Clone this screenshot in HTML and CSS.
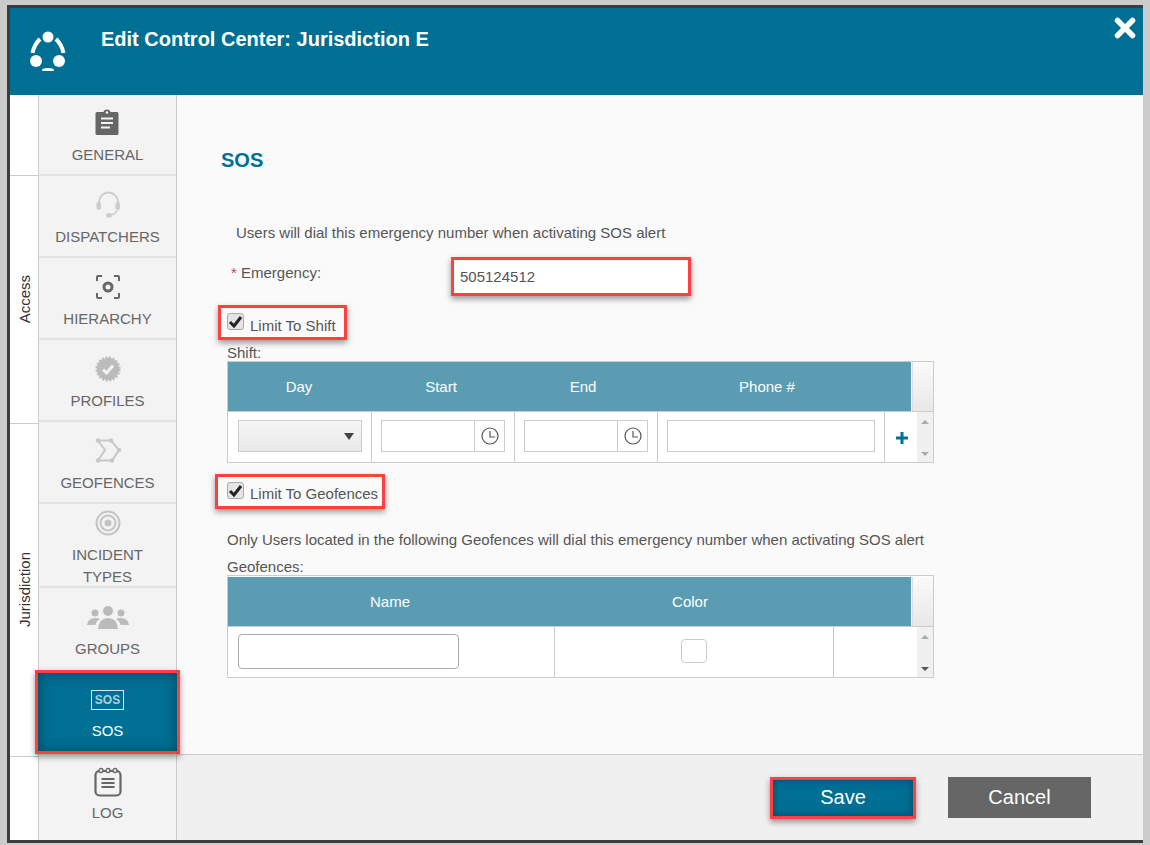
FILE: index.html
```html
<!DOCTYPE html>
<html lang="en">
<head>
<meta charset="utf-8">
<title>Edit Control Center</title>
<link rel="stylesheet" href="styles.css">
</head>
<body>
<div class="window">
  <header class="topbar">
    <svg class="logo" width="40" height="44" viewBox="0 0 40 44">
      <circle cx="21" cy="6" r="5.500" fill="#fff"/><circle cx="9" cy="30" r="6" fill="#fff"/><circle cx="32" cy="30" r="6" fill="#fff"/>
      <path d="M13 8 Q7 14 5.500 22" stroke="#fff" stroke-width="4" fill="none"/>
      <path d="M29 8 Q35 14 36.500 22" stroke="#fff" stroke-width="4" fill="none"/>
      <path d="M15.500 38 Q21 36 26.500 38 L27 40 H15 Z" fill="#fff"/>
    </svg>
    <h1 class="title">Edit Control Center: Jurisdiction E</h1>
    <svg class="close" width="22" height="22" viewBox="0 0 22 22"><path d="M3.500 3.500 L18.500 18.500 M18.500 3.500 L3.500 18.500" stroke="#fff" stroke-width="5.500" stroke-linecap="round"/></svg>
  </header>
  <div class="body">
    <div class="groups">
      <div class="group group-top"></div>
      <div class="group group-access"><span class="group-text">Access</span></div>
      <div class="group group-jur"><span class="group-text">Jurisdiction</span></div>
      <div class="group group-end"></div>
    </div>
    <nav class="tabs">
      <div class="tab tab-general">
        <svg class="tab-icon" viewBox="0 0 28 28"><path d="M3 4 H9.500 Q10 1.500 13 1.500 Q16 1.500 16.500 4 H23 Q24.500 4 24.500 5.500 V25.500 Q24.500 27 23 27 H3 Q1.500 27 1.500 25.500 V5.500 Q1.500 4 3 4 Z" fill="#666"/><path d="M7 10.500 H19 M7 15 H19 M7 19.500 H16" stroke="#f3f3f3" stroke-width="2"/><circle cx="13" cy="4.500" r="1.300" fill="#f3f3f3"/></svg>
        <span class="tab-label">GENERAL</span>
      </div>
      <div class="tab">
        <svg class="tab-icon" viewBox="0 0 28 28"><path d="M5 15 V11 A9.500 9.500 0 0 1 24 11 V15" fill="none" stroke="#ccc" stroke-width="1.800"/><rect x="2.500" y="11" width="4.500" height="8" rx="2.200" fill="#ccc"/><rect x="21.500" y="11" width="4.500" height="8" rx="2.200" fill="#ccc"/><path d="M23 19 Q22 23 17 24" fill="none" stroke="#ccc" stroke-width="1.500"/><rect x="12" y="22" width="6" height="4.500" rx="2.200" fill="#ccc"/></svg>
        <span class="tab-label">DISPATCHERS</span>
      </div>
      <div class="tab">
        <svg class="tab-icon" viewBox="0 0 28 28"><path d="M8 3 H4 Q3 3 3 4 V8 M20 3 H24 Q25 3 25 4 V8 M8 25 H4 Q3 25 3 24 V20 M20 25 H24 Q25 25 25 24 V20" fill="none" stroke="#666" stroke-width="2"/><circle cx="14" cy="14" r="4" fill="none" stroke="#666" stroke-width="3"/></svg>
        <span class="tab-label">HIERARCHY</span>
      </div>
      <div class="tab">
        <svg class="tab-icon" viewBox="0 0 28 28"><circle cx="14" cy="14" r="11" fill="#bbb" stroke="#bbb" stroke-width="3" stroke-dasharray="2 1.500"/><path d="M9 14.500 L12.500 18 L19 10.500" fill="none" stroke="#f3f3f3" stroke-width="3"/></svg>
        <span class="tab-label">PROFILES</span>
      </div>
      <div class="tab">
        <svg class="tab-icon" viewBox="0 0 28 28"><path d="M4 3.500 H17 L25 13 L18 23.500 H4 L11 13 Z" fill="none" stroke="#c8c8c8" stroke-width="2"/><g fill="#c8c8c8"><circle cx="4" cy="3.500" r="2.200"/><circle cx="17" cy="3.500" r="2.200"/><circle cx="25" cy="13" r="2.200"/><circle cx="18" cy="23.500" r="2.200"/><circle cx="4" cy="23.500" r="2.200"/></g></svg>
        <span class="tab-label">GEOFENCES</span>
      </div>
      <div class="tab tab-incident">
        <svg class="tab-icon" viewBox="0 0 28 28"><circle cx="14" cy="14" r="11.500" fill="none" stroke="#c4c4c4" stroke-width="2"/><circle cx="14" cy="14" r="7.500" fill="none" stroke="#c4c4c4" stroke-width="2"/><circle cx="14" cy="14" r="3.500" fill="#c4c4c4"/></svg>
        <span class="tab-label">INCIDENT TYPES</span>
      </div>
      <div class="tab tab-groups">
        <svg class="tab-icon tab-icon-wide" viewBox="0 0 42 28"><g fill="#bbb"><circle cx="21" cy="8" r="5"/><circle cx="8" cy="10" r="3.500"/><circle cx="34" cy="10" r="3.500"/><path d="M11 26 Q12 15 21 15 Q30 15 31 26 Z"/><path d="M0 22 Q1 15 8 15 Q11 15 13 16 Q9 18 8.500 22 Z"/><path d="M42 22 Q41 15 34 15 Q31 15 29 16 Q33 18 33.500 22 Z"/></g></svg>
        <span class="tab-label">GROUPS</span>
      </div>
      <div class="tab tab-sos">
        <span class="sos-badge">SOS</span>
        <span class="tab-label">SOS</span>
      </div>
      <div class="tab tab-log">
        <svg class="tab-icon tab-icon-tall" viewBox="0 0 28 30"><rect x="1.500" y="4" width="25" height="24.500" rx="4" fill="none" stroke="#666" stroke-width="2.200"/><path d="M7.500 12 H20.500 M7.500 16 H20.500 M7.500 20 H20.500" stroke="#666" stroke-width="2.200"/><g fill="#f3f3f3" stroke="#666" stroke-width="1.300"><circle cx="7" cy="3.500" r="2"/><circle cx="14" cy="3.500" r="2"/><circle cx="21" cy="3.500" r="2"/></g></svg>
        <span class="tab-label">LOG</span>
      </div>
    </nav>
    <div class="main">
      <section class="content">
        <h2 class="heading">SOS</h2>
        <p class="notice">Users will dial this emergency number when activating SOS alert</p>
        <div class="emergency">
          <label class="emergency-label"><span class="star">*</span> Emergency:</label>
          <input class="emergency-input marked" type="text" value="505124512">
        </div>
        <div class="limit limit-shift marked">
          <span class="check"><svg width="15" height="13" viewBox="0 0 15 13"><path d="M2 7 L6 11 L13 2" fill="none" stroke="#222" stroke-width="3"/></svg></span>
          <span class="limit-text">Limit To Shift</span>
        </div>
        <div class="field-label field-shift">Shift:</div>
        <div class="grid-box">
          <div class="grid-head grid-head-shift">
            <div class="head-cells head-cells-shift">
              <span>Day</span><span>Start</span><span>End</span><span>Phone #</span>
            </div>
            <div class="head-gutter"></div>
          </div>
          <div class="grid-row grid-row-shift">
            <div class="cell"><div class="select"><span class="select-arrow"></span></div></div>
            <div class="cell cell-tight"><div class="time"><input class="time-input" type="text"><span class="time-btn"><svg width="18" height="18" viewBox="0 0 18 18"><circle cx="9" cy="9" r="8" fill="none" stroke="#555" stroke-width="1.200"/><path d="M9 4 V10 H14" fill="none" stroke="#555" stroke-width="1.200"/></svg></span></div></div>
            <div class="cell cell-tight"><div class="time"><input class="time-input" type="text"><span class="time-btn"><svg width="18" height="18" viewBox="0 0 18 18"><circle cx="9" cy="9" r="8" fill="none" stroke="#555" stroke-width="1.200"/><path d="M9 4 V10 H14" fill="none" stroke="#555" stroke-width="1.200"/></svg></span></div></div>
            <div class="cell cell-tight"><input class="phone-input" type="text"></div>
            <div class="cell cell-plus"><svg width="14" height="14" viewBox="0 0 14 14"><path d="M7 1 V13 M1 7 H13" stroke="#006f94" stroke-width="3"/></svg></div>
            <div class="scroll"><span class="arrow-up"></span><span class="arrow-down"></span></div>
          </div>
        </div>
        <div class="limit limit-geo marked">
          <span class="check"><svg width="15" height="13" viewBox="0 0 15 13"><path d="M2 7 L6 11 L13 2" fill="none" stroke="#222" stroke-width="3"/></svg></span>
          <span class="limit-text">Limit To Geofences</span>
        </div>
        <p class="geo-note">Only Users located in the following Geofences will dial this emergency number when activating SOS alert</p>
        <div class="field-label field-geo">Geofences:</div>
        <div class="grid-box">
          <div class="grid-head grid-head-geo">
            <div class="head-cells head-cells-geo">
              <span>Name</span><span>Color</span>
            </div>
            <div class="head-gutter"></div>
          </div>
          <div class="grid-row grid-row-geo">
            <div class="cell"><input class="name-input" type="text"></div>
            <div class="cell cell-color"><span class="swatch"></span></div>
            <div class="cell cell-empty"></div>
            <div class="scroll"><span class="arrow-up"></span><span class="arrow-down arrow-dark"></span></div>
          </div>
        </div>
      </section>
      <footer class="actions">
        <button class="btn btn-save marked" type="button">Save</button>
        <button class="btn btn-cancel" type="button">Cancel</button>
      </footer>
    </div>
  </div>
</div>
</body>
</html>
```
FILE: styles.css
```css
* { box-sizing: border-box; }
html, body { margin: 0; height: 845px; overflow: hidden; background: #ccc; }
body { font-family: "Liberation Sans", Arial, sans-serif; font-size: 15px; color: #555; }

.window {
  width: 1136px; height: 838px; margin: 5px 0 0 7px;
  border-top: 3px solid #3d3d3d; border-left: 3px solid #3d3d3d; border-bottom: 3px solid #3d3d3d;
  display: flex; flex-direction: column; background: #fff;
}

.topbar { height: 87px; flex: none; background: #006f94; display: flex; align-items: flex-start; }
.logo { margin: 23px 0 0 17px; flex: none; }
.title { margin: 19px 0 0 34px; font-size: 20px; line-height: 24px; font-weight: 700; color: #fff; }
.close { margin: 9px 7px 0 auto; flex: none; }

.body { flex: 1; display: flex; min-height: 0; }

.groups { width: 28px; flex: none; display: flex; flex-direction: column; background: #fff; }
.group { display: flex; align-items: center; justify-content: center; border-bottom: 1px solid #ccc; }
.group-top { height: 81px; }
.group-access { height: 248px; }
.group-jur { height: 333px; }
.group-end { flex: 1; border-bottom: 0; }
.group-text { writing-mode: vertical-rl; transform: rotate(180deg); color: #333; font-size: 15px; }

.tabs { width: 139px; flex: none; display: flex; flex-direction: column; background: #f3f3f3; border-left: 1px solid #ccc; border-right: 1px solid #ccc; }
.tab { height: 82px; padding-top: 15px; display: flex; flex-direction: column; align-items: center; border-bottom: 2px solid #e2e2e2; flex: none; }
.tab-general { height: 81px; padding-top: 13px; }
.tab-general .tab-label { margin-top: 8px; }
.tab-incident { height: 84px; padding-top: 5px; }
.tab-groups { height: 85px; border-bottom: 0; }
.tab-sos { height: 78px; padding-top: 12px; background: #006f94; box-shadow: inset 0 0 14px rgba(0, 0, 0, .35), 0 3px 6px 3px rgba(0, 0, 0, .4); outline: 3px solid #ff4040; border: 0; position: relative; margin: 0 -1px; color: #fff; }
.tab-log { flex: 1; height: auto; padding-top: 16px; border-bottom: 0; }
.tab-icon { width: 28px; height: 28px; display: block; flex: none; }
.tab-icon-wide { width: 42px; }
.tab-icon-tall { height: 30px; margin-bottom: -2px; }
.tab-label { margin-top: 7px; line-height: 22px; width: 110px; text-align: center; color: #666; font-size: 15px; }
.tab-sos .tab-label { color: #fff; }
.sos-badge { width: 33px; height: 20px; margin-top: 5px; margin-bottom: 3px; border: 1px solid #d5e6ec; color: #a9cfdc; font-size: 12px; font-weight: 700; line-height: 18px; text-align: center; flex: none; }

.main { flex: 1; display: flex; flex-direction: column; min-width: 0; }
.content { flex: 1; background: #fafafa; padding: 54px 0 0 44px; min-height: 0; }
.heading { margin: 0; font-size: 20px; line-height: 22px; font-weight: 700; color: #006f94; }
.notice { margin: 52px 0 0 15px; line-height: 20px; }

.emergency { margin-top: 17px; display: flex; align-items: flex-start; }
.emergency-label { width: 233px; padding: 3px 0 0 10px; line-height: 20px; }
.star { color: #e8326a; }
.emergency-input { width: 234px; height: 33px; padding: 0 6px; border: 0; background: #fff; font: 15px "Liberation Sans", Arial, sans-serif; color: #555; }

.marked { outline: 3px solid #ff4040; box-shadow: 0 3px 6px 3px rgba(0, 0, 0, .4); }

.limit { height: 29px; display: flex; align-items: flex-start; }
.limit-shift { width: 123px; margin-top: 15px; padding-left: 6px; }
.limit-geo { width: 164px; margin: 14px 0 0 -3px; padding-left: 9px; }
.check { width: 17px; height: 17px; margin-top: 5px; flex: none; border: 1px solid #aaa; border-radius: 3px; background: #e4e4e4; display: flex; align-items: center; justify-content: center; }
.limit-text { margin: 8px 0 0 6px; line-height: 20px; white-space: nowrap; }
.limit-geo .limit-text { margin-top: 7px; }

.field-label { margin-left: 6px; }
.field-shift { margin-top: 8px; line-height: 16px; }
.field-geo { margin-top: 8px; line-height: 17px; }
.geo-note { margin: 24px 0 0 6px; line-height: 20px; }

.grid-box { width: 707px; margin-left: 6px; border: 1px solid #ccc; background: #fff; }
.grid-head { display: flex; border-bottom: 1px solid #ccc; }
.grid-head-shift { height: 50px; }
.grid-head-geo { height: 51px; padding-top: 1px; }
.head-cells { width: 683px; background: #5b9cb2; color: #fff; display: grid; align-items: center; text-align: center; }
.head-cells-shift { grid-template-columns: 142px 142px 142px 226px 1fr; }
.head-cells-geo { grid-template-columns: 324px 276px 1fr; }
.head-gutter { margin-left: 1px; flex: 1; background: linear-gradient(#fafafa, #e8e8e8); border-left: 1px solid #ddd; }

.grid-row { height: 50px; display: grid; }
.grid-row-shift { grid-template-columns: 144px 143px 143px 227px 32px 16px; }
.grid-row-geo { grid-template-columns: 327px 279px 83px 16px; }
.cell { border-right: 1px solid #ccc; padding: 8px 0 0 10px; }
.cell-tight { padding-left: 9px; }
.cell-plus { padding: 19px 0 0 10px; border-right: 0; }
.cell-color { padding: 12px 0 0 126px; }
.cell-empty { border-right: 0; }
.select { width: 124px; height: 32px; border: 1px solid #ccc; background: linear-gradient(#f6f6f6, #e9e9e9); display: flex; align-items: center; justify-content: flex-end; padding-right: 7px; }
.select-arrow { width: 0; height: 0; border-left: 5px solid transparent; border-right: 5px solid transparent; border-top: 7px solid #444; }
.time { width: 124px; height: 32px; border: 1px solid #ccc; background: #fff; display: flex; }
.time-input { width: 93px; border: 0; border-right: 1px solid #ccc; padding: 0; background: #fff; }
.time-btn { flex: 1; display: flex; align-items: center; justify-content: center; }
.phone-input { width: 208px; height: 32px; border: 1px solid #ccc; background: #fff; padding: 0; display: block; }
.name-input { width: 221px; height: 35px; margin-top: -1px; border: 1px solid #aaa; border-radius: 4px; background: #fff; padding: 0; display: block; }
.swatch { display: block; width: 26px; height: 24px; border: 1px solid #ccc; border-radius: 4px; background: #fff; }

.scroll { background: #f0f0f0; display: flex; flex-direction: column; align-items: center; justify-content: space-between; padding: 8px 0 6px; }
.arrow-up { width: 0; height: 0; border-left: 4px solid transparent; border-right: 4px solid transparent; border-bottom: 4px solid #aaa; }
.arrow-down { width: 0; height: 0; border-left: 4px solid transparent; border-right: 4px solid transparent; border-top: 4px solid #aaa; }
.arrow-dark { border-top-color: #555; }

.actions { height: 86px; flex: none; background: #f0f0f0; border-top: 1px solid #ccc; display: flex; align-items: center; justify-content: flex-end; gap: 35px; padding: 0 52px 0 0; }
.btn { border: 0; font: 20px "Liberation Sans", Arial, sans-serif; color: #fff; padding: 0; }
.btn-save { width: 140px; height: 36px; background: #006f94; box-shadow: inset 0 0 8px rgba(0, 0, 0, .35), 0 3px 6px 3px rgba(0, 0, 0, .4); }
.btn-cancel { width: 143px; height: 41px; background: #666; }
```
